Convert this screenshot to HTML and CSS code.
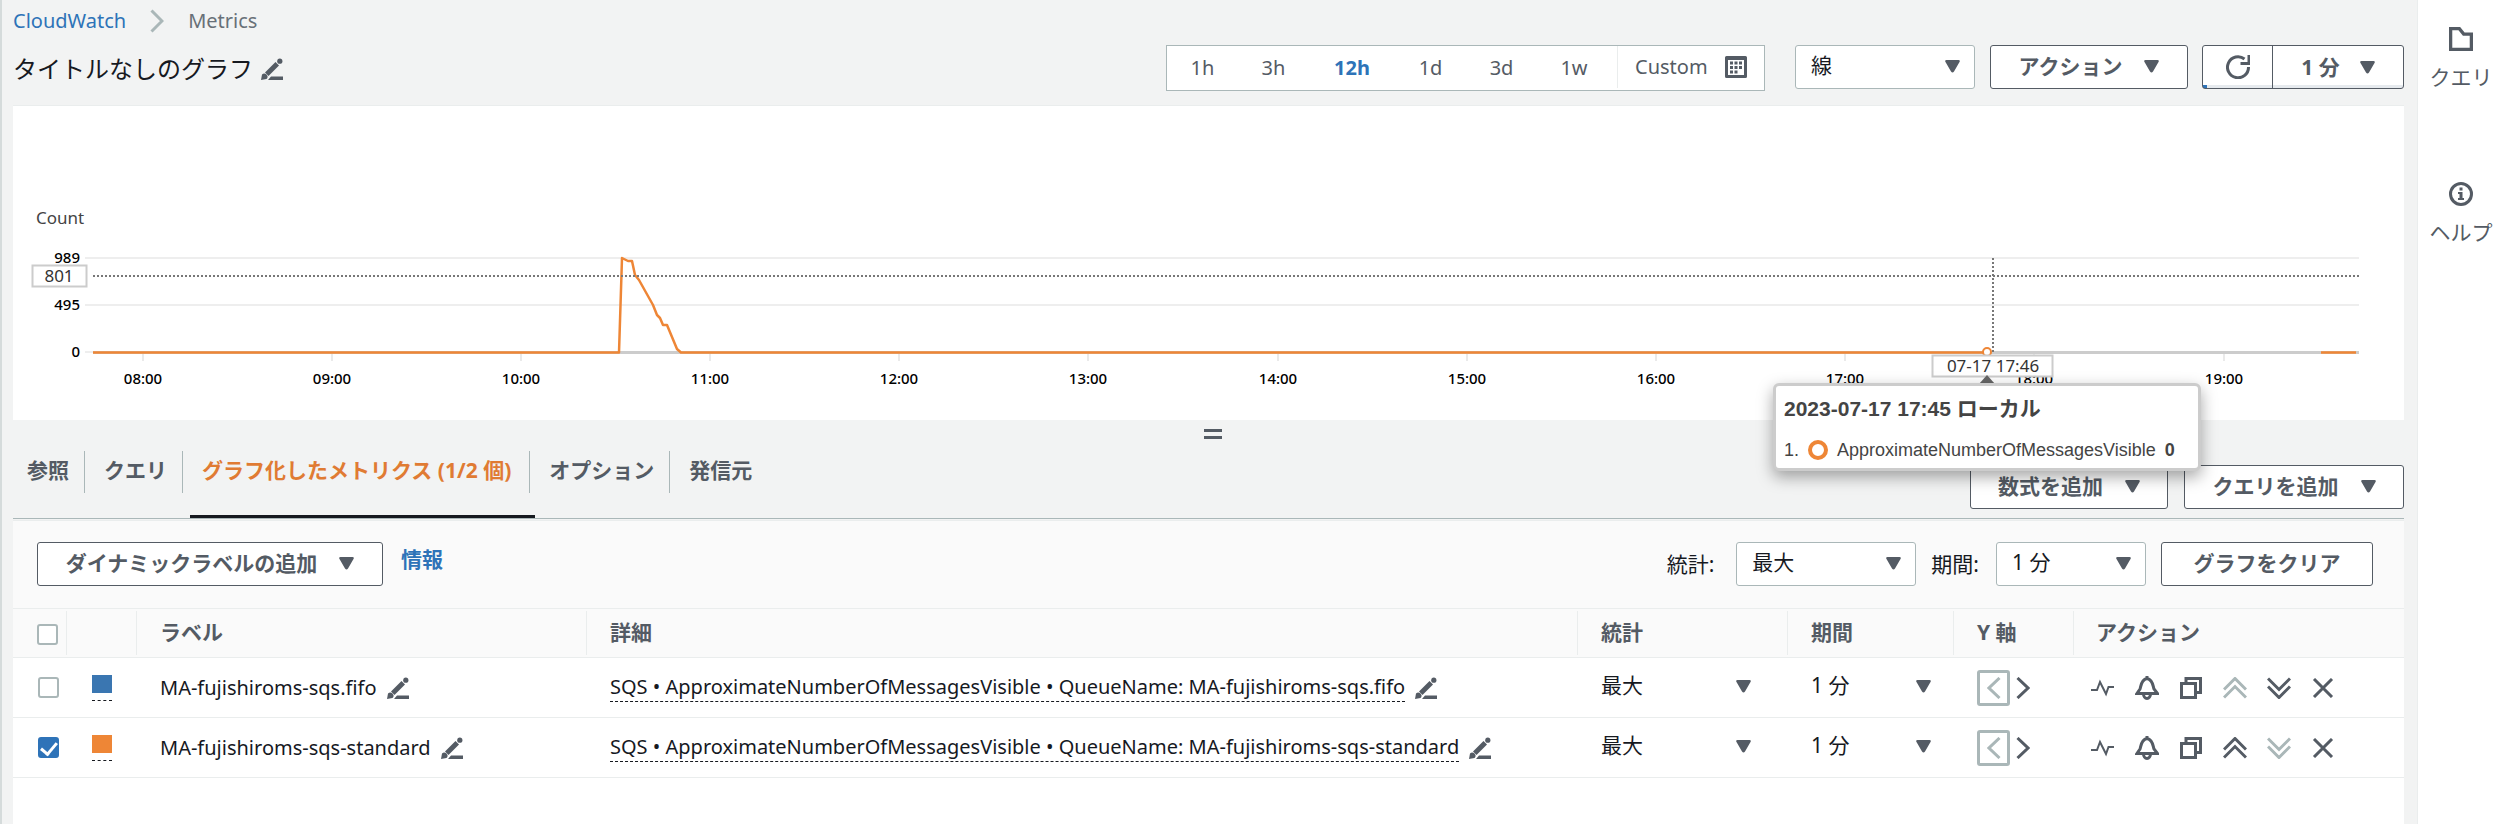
FILE: index.html
```html
<!DOCTYPE html>
<html lang="ja">
<head>
<meta charset="utf-8">
<meta name="viewport" content="width=device-width, initial-scale=1">
<title>CloudWatch Metrics</title>
<link rel="stylesheet" href="styles.css">
</head>
<body>
<svg class="defs" aria-hidden="true">
  <symbol id="pencil" viewBox="0 0 22 22">
    <path d="M0 22 1 16.500a3 3 0 0 1 4.500 4.500Z"/>
    <path d="M4 14.500 14.500 4l3.500 3.500L7.500 18Z"/>
    <circle cx="18.800" cy="3.200" r="2.600"/>
    <path d="M10 18.500h12V22H7Z"/>
  </symbol>
  <symbol id="caret" viewBox="0 0 15 13"><path d="M1.500 0h12q2 .3 1 2L9 11.500q-1.500 2-3 0L.500 2q-1-1.700 1-2Z"/></symbol>
  <symbol id="pulse" viewBox="0 0 24 24"><path d="M0 14h6l3-8 6 12 2.500-7H23" class="line thin"/></symbol>
  <symbol id="bell" viewBox="0 0 24 24"><path d="M12 0v2M2 17.500h20.500L19 13c-1-2-.500-9-7-10.500C5.500 4 6 11 5 13Z" class="line"/><path d="M8.500 18a3.500 4.500 0 0 0 7 0" class="line"/></symbol>
  <symbol id="copy" viewBox="0 0 22 22"><path d="M1.500 6.500h14v14h-14Z" class="line"/><path d="M6 5V1.500h14.500v14H17" class="line"/></symbol>
  <symbol id="up" viewBox="0 0 24 22"><path d="m1 12.500 11-11 11 11M1 20.500l11-11 11 11" class="line"/></symbol>
  <symbol id="down" viewBox="0 0 24 22"><path d="m1 1.500 11 11 11-11M1 9.500l11 11 11-11" class="line"/></symbol>
  <symbol id="cross" viewBox="0 0 20 20"><path d="m1 1 18 18M19 1 1 19" class="line"/></symbol>
  <symbol id="left" viewBox="0 0 14 22"><path d="M12.500 1 2 11l10.500 10" class="line"/></symbol>
  <symbol id="right" viewBox="0 0 14 22"><path d="M1.500 1 12 11 1.500 21" class="line"/></symbol>
</svg>

<main class="main">
  <nav class="crumbs" aria-label="breadcrumb">
    <a href="#">CloudWatch</a>
    <svg class="crumb-sep" viewBox="0 0 14 24"><path d="m1.500 1.500 10.500 10.500L1.500 22.500"/></svg>
    <span>Metrics</span>
  </nav>
  <header class="head">
    <h1 class="title">タイトルなしのグラフ</h1>
    <button class="icon" aria-label="タイトルを編集"><svg class="i22"><use href="#pencil"/></svg></button>
    <div class="controls">
      <div class="range">
        <button>1h</button><button>3h</button><button class="on">12h</button><button>1d</button><button>3d</button><button class="week">1w</button>
        <button class="custom">Custom
          <svg class="i22" viewBox="0 0 22 22"><path fill-rule="evenodd" d="M1.500 0h19Q22 0 22 1.500v19q0 1.500-1.500 1.500h-19Q0 22 0 20.500v-19Q0 0 1.500 0ZM3 4v15h16V4Z"/><path d="M5 5.500h3v3H5zM9.500 5.500h3v3h-3zM14 5.500h3v3h-3zM5 10h3v3H5zM9.500 10h3v3h-3zM14 10h3v3h-3zM5 14.500h3v3H5zM9.500 14.500h3v3h-3z"/></svg>
        </button>
      </div>
      <span class="select w-type"><select aria-label="グラフの種類"><option>線</option></select><svg class="caret"><use href="#caret"/></svg></span>
      <button class="btn w-action">アクション<svg class="caret"><use href="#caret"/></svg></button>
      <div class="refresh">
        <button class="reload" aria-label="更新"><svg viewBox="0 0 24 24"><path d="M22.500 12A10.500 10.500 0 1 1 18.500 4"/><path d="M23 0v8.500h-8.500" /></svg></button>
        <button class="every">1 分<svg class="caret"><use href="#caret"/></svg></button>
      </div>
    </div>
  </header>

  <section class="chart">
    <svg class="plot" viewBox="0 1 2391 314" role="img" aria-label="Count">
      <g class="grid"><path d="M72 153H2346M72 200H2346M72 247h8"/></g>
      <path class="ticks" d="M130 249v7M319 249v7M508 249v7M697 249v7M886 249v7M1075 249v7M1265 249v7M1454 249v7M1643 249v7M1832 249v7M2021 249v7M2211 249v7"/>
      <path class="axis" d="M80 247.500H2346"/>
      <path class="series" d="M80 247.500H606L609 153l6 3h4l3 14 4 5 14 25 4 10 3 3 3 7h4l10 24 4 3.500H1974M2308 247.500h35"/>
      <path class="cursor" d="M80 171H2346M1980 153v94"/>
      <circle class="dot" cx="1974" cy="247" r="4"/>
      <text class="unit" x="23" y="119">Count</text>
      <g class="num end"><text x="67" y="158">989</text><text x="67" y="205">495</text><text x="67" y="252">0</text></g>
      <g class="num mid">
        <text x="130" y="279">08:00</text><text x="319" y="279">09:00</text><text x="508" y="279">10:00</text><text x="697" y="279">11:00</text><text x="886" y="279">12:00</text><text x="1075" y="279">13:00</text><text x="1265" y="279">14:00</text><text x="1454" y="279">15:00</text><text x="1643" y="279">16:00</text><text x="1832" y="279">17:00</text><text x="2021" y="279">18:00</text><text x="2211" y="279">19:00</text>
      </g>
      <rect class="tag" x="19.500" y="160.500" width="54" height="21"/><text class="tagtext" x="46" y="177">801</text>
      <rect class="tag" x="1919.500" y="250.500" width="120" height="21"/><text class="tagtext" x="1980" y="267">07-17 17:46</text>
      <path class="tip-arrow" d="m1974 270 8 9h-16Z"/>
    </svg>
    <div class="tooltip">
      <strong class="tip-head">2023-07-17 17:45 ローカル</strong>
      <div class="tip-row"><span>1.</span><i class="ring"></i><span>ApproximateNumberOfMessagesVisible</span><b>0</b></div>
    </div>
  </section>
  <div class="grip" role="separator"><i></i><i></i></div>

  <div class="tabbar">
    <div class="tabs" role="tablist">
      <button role="tab">参照</button><button role="tab">クエリ</button><button role="tab" class="on" aria-selected="true">グラフ化したメトリクス (1/2 個)</button><button role="tab">オプション</button><button role="tab">発信元</button>
    </div>
    <button class="btn w-math">数式を追加<svg class="caret"><use href="#caret"/></svg></button>
    <button class="btn w-query">クエリを追加<svg class="caret"><use href="#caret"/></svg></button>
  </div>

  <section class="panel">
    <div class="tools">
      <button class="btn w-label">ダイナミックラベルの追加<svg class="caret"><use href="#caret"/></svg></button>
      <a class="info" href="#">情報</a>
      <label class="field" for="stat">統計:</label>
      <span class="select w-stat"><select id="stat"><option>最大</option></select><svg class="caret"><use href="#caret"/></svg></span>
      <label class="field" for="period">期間:</label>
      <span class="select w-period"><select id="period"><option>1 分</option></select><svg class="caret"><use href="#caret"/></svg></span>
      <button class="btn w-clear">グラフをクリア</button>
    </div>
    <table class="metrics">
      <colgroup><col class="c-check"><col class="c-color"><col class="c-label"><col><col class="c-stat"><col class="c-period"><col class="c-axis"><col class="c-act"></colgroup>
      <thead><tr>
        <th><input type="checkbox" aria-label="すべて選択"></th><th></th><th>ラベル</th><th>詳細</th><th>統計</th><th>期間</th><th>Y 軸</th><th>アクション</th>
      </tr></thead>
      <tbody>
        <tr>
          <td><input type="checkbox" aria-label="MA-fujishiroms-sqs.fifo"></td>
          <td><button class="swatch blue" aria-label="色"><i></i></button></td>
          <td><div class="cell">MA-fujishiroms-sqs.fifo<button class="icon" aria-label="編集"><svg class="i22"><use href="#pencil"/></svg></button></div></td>
          <td><div class="cell"><span class="dash">SQS • ApproximateNumberOfMessagesVisible • QueueName: MA-fujishiroms-sqs.fifo</span><button class="icon" aria-label="編集"><svg class="i22"><use href="#pencil"/></svg></button></div></td>
          <td><span class="select bare"><select aria-label="統計"><option>最大</option></select><svg class="caret"><use href="#caret"/></svg></span></td>
          <td><span class="select bare short"><select aria-label="期間"><option>1 分</option></select><svg class="caret"><use href="#caret"/></svg></span></td>
          <td><div class="axis-pick"><button class="icon boxed" aria-label="左"><svg class="chev"><use href="#left"/></svg></button><button class="icon" aria-label="右"><svg class="chev"><use href="#right"/></svg></button></div></td>
          <td><div class="acts"><button class="icon" aria-label="異常検出"><svg><use href="#pulse"/></svg></button><button class="icon" aria-label="アラーム"><svg><use href="#bell"/></svg></button><button class="icon" aria-label="複製"><svg class="mid-size"><use href="#copy"/></svg></button><button class="icon off" aria-label="上へ"><svg class="mid-size"><use href="#up"/></svg></button><button class="icon" aria-label="下へ"><svg class="mid-size"><use href="#down"/></svg></button><button class="icon" aria-label="削除"><svg class="small"><use href="#cross"/></svg></button></div></td>
        </tr>
        <tr>
          <td><input type="checkbox" checked aria-label="MA-fujishiroms-sqs-standard"></td>
          <td><button class="swatch orange" aria-label="色"><i></i></button></td>
          <td><div class="cell">MA-fujishiroms-sqs-standard<button class="icon" aria-label="編集"><svg class="i22"><use href="#pencil"/></svg></button></div></td>
          <td><div class="cell"><span class="dash">SQS • ApproximateNumberOfMessagesVisible • QueueName: MA-fujishiroms-sqs-standard</span><button class="icon" aria-label="編集"><svg class="i22"><use href="#pencil"/></svg></button></div></td>
          <td><span class="select bare"><select aria-label="統計"><option>最大</option></select><svg class="caret"><use href="#caret"/></svg></span></td>
          <td><span class="select bare short"><select aria-label="期間"><option>1 分</option></select><svg class="caret"><use href="#caret"/></svg></span></td>
          <td><div class="axis-pick"><button class="icon boxed" aria-label="左"><svg class="chev"><use href="#left"/></svg></button><button class="icon" aria-label="右"><svg class="chev"><use href="#right"/></svg></button></div></td>
          <td><div class="acts"><button class="icon" aria-label="異常検出"><svg><use href="#pulse"/></svg></button><button class="icon" aria-label="アラーム"><svg><use href="#bell"/></svg></button><button class="icon" aria-label="複製"><svg class="mid-size"><use href="#copy"/></svg></button><button class="icon" aria-label="上へ"><svg class="mid-size"><use href="#up"/></svg></button><button class="icon off" aria-label="下へ"><svg class="mid-size"><use href="#down"/></svg></button><button class="icon" aria-label="削除"><svg class="small"><use href="#cross"/></svg></button></div></td>
        </tr>
      </tbody>
    </table>
  </section>
</main>

<aside class="side">
  <button><svg viewBox="0 0 22 22"><path d="M1.500 1.500h8l4 5h7v14h-19Z" class="line"/></svg>クエリ</button>
  <button><svg viewBox="0 0 24 24"><circle cx="12" cy="12" r="10.500" class="line"/><path d="M10.500 5.500h3v3h-3zM9 10h4.500v6H15v2H9v-2h1.500v-4H9z"/></svg>ヘルプ</button>
</aside>
</body>
</html>
```
FILE: styles.css
```css
* { box-sizing: border-box; }
body {
  margin: 0;
  min-height: 100vh;
  display: flex;
  background: #f2f3f3;
  border-left: 2px solid #d5dbdb;
  color: #16191f;
  font: 20px/28px "Noto Sans", "Noto Sans CJK JP", sans-serif;
}
button, select, input { font: inherit; color: inherit; }
button { margin: 0; padding: 0; border: 0; background: none; cursor: pointer; }
a { color: #2e73b8; text-decoration: none; }
svg { display: block; fill: #545b64; }
.defs { position: absolute; width: 0; height: 0; }
.line { fill: none; stroke: currentColor; stroke-width: 3; }
.thin { stroke-width: 2; }
.i22 { width: 22px; height: 22px; flex: none; }
.icon { color: #545b64; flex: none; display: grid; place-items: center; }
.off { color: #aab7b8; }
.caret { width: 15px; height: 13px; flex: none; }

.main { flex: 1; min-width: 0; display: flex; flex-direction: column; padding: 0 13px 0 11px; }

.crumbs { display: flex; align-items: center; height: 45px; padding-bottom: 4px; gap: 24px; color: #687078; }
.crumb-sep { width: 14px; height: 24px; fill: none; stroke: #aab7b8; stroke-width: 3; }

.head { display: flex; align-items: center; height: 61px; padding-bottom: 12px; gap: 8px; border-bottom: 1px solid #eaeded; }
.title { margin: 0; font-size: 24px; line-height: 36px; font-weight: 400; }
.controls { margin-left: auto; display: flex; align-items: flex-start; height: 48px; }
.range { display: flex; height: 46px; margin-right: 30px; background: #fff; border: 1px solid #aab7b8; color: #545b64; }
.range button { width: 71px; }
.range button.on { width: 86px; color: #2e73b8; font-weight: 700; }
.range .week { width: 80px; padding-right: 6px; }
.range .custom { display: flex; align-items: center; gap: 17px; width: 147px; height: 42px; padding-left: 17px; border-left: 1px solid #eaeded; }

.btn { display: flex; align-items: center; justify-content: center; gap: 22px; height: 44px; padding-bottom: 2px; background: #fff; border: 1px solid #545b64; border-radius: 3px; color: #545b64; font-size: 21px; font-weight: 700; flex: none; }
.select { position: relative; display: block; flex: none; }
.select select { appearance: none; display: block; width: 100%; height: 44px; padding: 0 44px 4px 15px; background: #fff; border: 1px solid #aab7b8; border-radius: 3px; font-size: 21px; }
.select .caret { position: absolute; right: 15px; top: 15px; pointer-events: none; }
.w-type { width: 180px; margin-right: 15px; }
.w-action { width: 198px; margin-right: 14px; }
.w-math { width: 198px; margin-right: 16px; }
.w-query { width: 220px; }
.w-label { width: 346px; }
.w-stat { width: 180px; margin: 0 15px 0 22px; }
.w-period { width: 150px; margin: 0 15px 0 17px; }
.w-clear { width: 212px; }

.refresh { display: flex; height: 44px; background: linear-gradient(90deg, #2e73b8 4px, #e6eaee 4px) bottom / 100% 3px no-repeat #fff; border: 1px solid #545b64; border-radius: 3px; }
.reload { width: 70px; border-right: 1px solid #545b64; display: grid; place-items: center; }
.reload svg { width: 24px; height: 24px; fill: none; stroke: #545b64; stroke-width: 3; }
.every { width: 130px; display: flex; align-items: center; justify-content: center; gap: 20px; color: #545b64; font-size: 21px; font-weight: 700; }

.chart { position: relative; background: #fff; }
.plot { width: 100%; height: auto; }
.grid { stroke: #eee; stroke-width: 2; }
.ticks { stroke: #eaeaea; stroke-width: 2; }
.axis { stroke: #ccc; stroke-width: 3; }
.series { fill: none; stroke: #ee8636; stroke-width: 2.500; stroke-linejoin: round; }
.cursor { fill: none; stroke: #777; stroke-width: 2; stroke-dasharray: 2 2; }
.dot { fill: #fff; stroke: #ee8636; stroke-width: 2; }
.unit { font-size: 17px; fill: #444; }
.num { font-size: 15px; font-weight: 500; fill: #000; }
.end { text-anchor: end; }
.mid { text-anchor: middle; }
.tag { fill: #fff; stroke: #ccc; stroke-width: 2; }
.tagtext { font-size: 17px; fill: #333; text-anchor: middle; }
.tip-arrow { fill: #666; }
.tooltip { position: absolute; z-index: 2; top: 277px; right: 203px; width: 428px; height: 88px; padding: 5px 8px; background: #fff; border: 3px solid #ccc; border-radius: 6px; box-shadow: 0 6px 16px rgba(0, 0, 0, .35); color: #444; font: 18px/28px "Liberation Sans", "Noto Sans CJK JP", sans-serif; }
.tip-head { display: block; font-size: 21px; line-height: 36px; }
.tip-row { display: flex; align-items: center; gap: 9px; margin-top: 9px; }
.ring { width: 20px; height: 20px; border: 4px solid #ee8636; border-radius: 50%; }

.grip { display: flex; flex-direction: column; align-items: center; gap: 4px; height: 31px; padding: 9px 0 0 8px; }
.grip i { width: 18px; height: 3px; background: #545b64; }

.tabbar { display: flex; align-items: flex-start; height: 68px; border-bottom: 1px solid #aab7b8; }
.tabs { display: flex; margin-right: auto; }
.tabs button { position: relative; height: 42px; padding: 0 15px 4px 19px; border-right: 1px solid #aab7b8; color: #545b64; font-weight: 700; font-size: 21px; }
.tabs button:first-child { padding-left: 14px; }
.tabs button:last-child { border: 0; }
.tabs .on { padding-right: 18px; color: #e07b33; }
.tabs .on::after { content: ""; position: absolute; left: 7px; right: -6px; top: 64px; height: 3px; background: #16191f; }
.tabbar .btn { margin-top: 14px; }

.panel { flex: 1; margin-top: 1px; background: #fff; border-top: 1px solid #eaeded; }
.tools { display: flex; align-items: center; height: 87px; padding: 0 31px 1px 24px; background: #fafafa; }
.info { margin: 0 auto 10px 18px; font-size: 21px; font-weight: 700; }
.field { font-size: 21px; }
.metrics { width: 100%; table-layout: fixed; border-collapse: separate; border-spacing: 0; border-top: 1px solid #eaeded; }
.c-check { width: 54px; }
.c-color { width: 70px; }
.c-label { width: 450px; }
.c-stat { width: 210px; }
.c-period { width: 166px; }
.c-axis { width: 120px; }
.c-act { width: 330px; }
th { height: 49px; padding: 0 0 2px 23px; text-align: left; color: #545b64; font-size: 21px; background: linear-gradient(#eaeded, #eaeded) right 2px / 1px 44px no-repeat #fafafa; border-bottom: 1px solid #eaeded; }
th:first-child { padding: 3px 0 0 24px; }
th:last-child { padding-left: 22px; background: #fafafa; }
td { height: 60px; padding: 0 0 0 23px; border-bottom: 1px solid #eaeded; }
td:first-child, td:nth-child(2) { padding-left: 25px; }
.cell { display: flex; align-items: center; gap: 10px; white-space: nowrap; }
.dash { border-bottom: 1px dashed #16191f; }
input[type="checkbox"] { appearance: none; display: block; width: 21px; height: 21px; margin: 0; background: #fff; border: 2px solid #aab7b8; border-radius: 3px; }
input[type="checkbox"]:checked { display: grid; place-items: center; background: #2e73b8; border-color: #2e73b8; }
input[type="checkbox"]:checked::after { content: ""; width: 7px; height: 13px; margin-bottom: 4px; border: solid #fff; border-width: 0 3px 3px 0; transform: rotate(40deg); }
.swatch { display: block; width: 20px; height: 26px; border-bottom: 1px dashed #16191f; }
.swatch i { display: block; height: 18px; margin-bottom: 7px; }
.blue i { background: #3a76b1; }
.orange i { background: #ee8636; }
.bare { width: 150px; }
.short { width: 120px; }
.bare select { border: 0; background: none; padding: 0 30px 6px 0; }
.bare .caret { right: 0; top: 14px; }
.axis-pick { display: flex; align-items: center; gap: 6px; }
.chev { width: 14px; height: 22px; }
.boxed { width: 33px; height: 36px; border: 3px solid #aab7b8; border-radius: 3px; color: #aab7b8; }
.acts { display: flex; align-items: center; gap: 20px; }
td:last-child { padding-left: 17px; }
.acts svg { width: 24px; height: 24px; }
.acts .mid-size { height: 22px; }
.acts .small { height: 20px; }

.side { width: 87px; flex: none; background: #fff; border-left: 1px solid #eaeded; display: flex; flex-direction: column; align-items: center; gap: 80px; padding-top: 27px; }
.side button { color: #545b64; font-size: 21px; line-height: 30px; display: flex; flex-direction: column; align-items: center; gap: 11px; padding-bottom: 10px; }
.side svg { width: 24px; height: 24px; }
```
